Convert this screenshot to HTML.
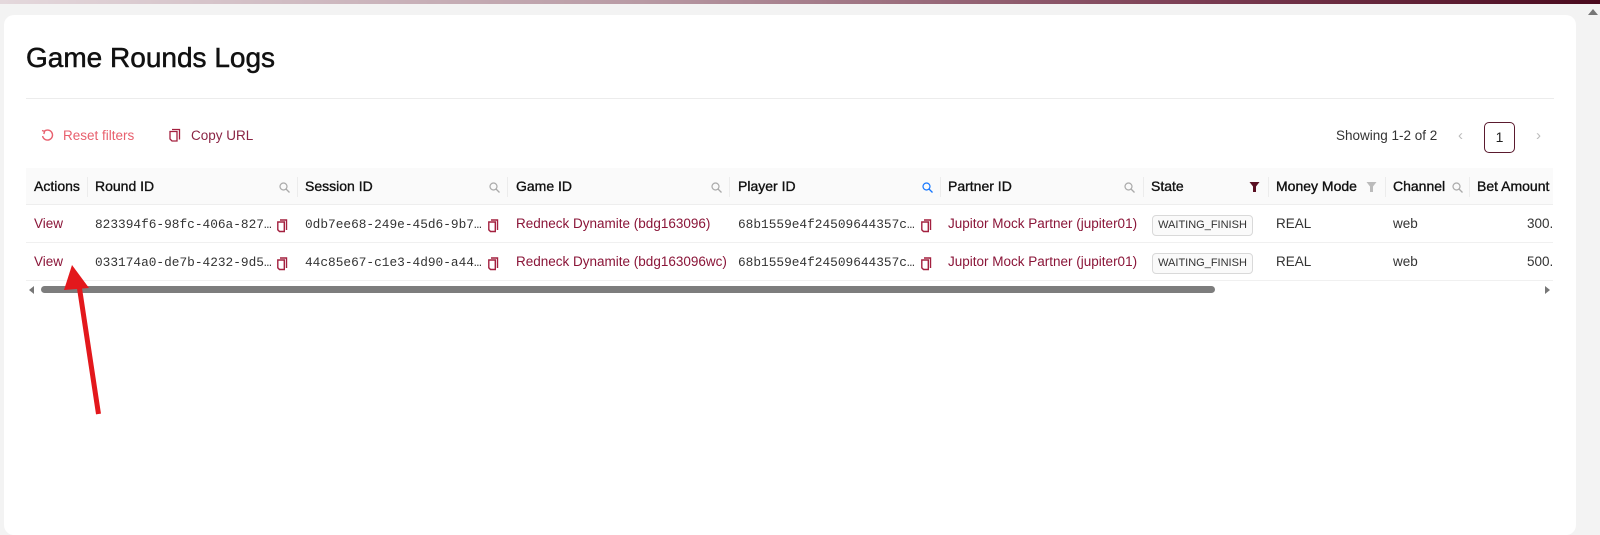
<!DOCTYPE html>
<html><head><style>
*{box-sizing:border-box;margin:0;padding:0}
body{width:1600px;height:512px;background:#f3f3f3;font-family:"Liberation Sans",sans-serif;position:relative;overflow:hidden;color:#1f1f1f}
.topbar{position:absolute;left:0;top:0;width:1600px;height:4px;background:linear-gradient(90deg,#e4d8dc,#b89aa4 40%,#7a3c52 75%,#4a0a1e)}
.card{position:absolute;left:4px;top:15px;width:1572px;height:520px;background:#fff;border-radius:10px}
.a{position:absolute;white-space:nowrap}
.title{left:26px;top:42px;font-size:28px;color:#111;-webkit-text-stroke:0.5px #111}
.div{position:absolute;left:26px;top:98px;width:1528px;height:1px;background:#ececec}
.tb{font-size:13.5px;top:128px}
.hdr{position:absolute;left:26px;top:168px;width:1528px;height:37px;background:#fafafa;border-bottom:1px solid #eee}
.row{position:absolute;left:26px;width:1528px;height:38px;border-bottom:1px solid #f0f0f0}
.h{font-size:14px;color:#111;top:178px;-webkit-text-stroke:0.35px #111}
.sep{position:absolute;top:177px;width:1px;height:20px;background:#ececec}
.c{font-size:13.5px}
.m{font-family:"Liberation Mono",monospace;font-size:12.8px;color:#333}
.lk{color:#8a1538}
.tag{position:absolute;border:1px solid #d9d9d9;border-radius:4px;background:#fafafa;font-size:11px;color:#333;width:101px;height:21px;line-height:19px;text-align:center}
</style></head><body>
<div class="topbar"></div>
<div style="position:absolute;left:1588px;top:9px;width:0;height:0;border-left:5px solid transparent;border-right:5px solid transparent;border-bottom:6px solid #777"></div>
<div class="card"></div>
<div class="a title">Game Rounds Logs</div>
<div class="div"></div>

<svg class="a" style="left:41px;top:129px" width="13" height="13" viewBox="0 0 13 13"><path d="M3 2.5 A5 5 0 1 1 1.6 7" fill="none" stroke="#e8606e" stroke-width="1.4"/><path d="M1 1.5 L3.6 2.4 L2.8 5" fill="none" stroke="#e8606e" stroke-width="1.4"/></svg>
<div class="a tb" style="left:63px;color:#e8606e">Reset filters</div>
<svg class="a" style="left:169px;top:128px" width="12" height="14" viewBox="0 0 12 14"><path d="M3 1.5h7.5v10" fill="none" stroke="#a3203f" stroke-width="1.3"/><path d="M1 3.5h7v9.5H3L1 11z" fill="#fff" stroke="#a3203f" stroke-width="1.3"/></svg>
<div class="a tb" style="left:191px;color:#8a2444">Copy URL</div>

<div class="a" style="left:1336px;top:128px;font-size:13.5px;color:#333">Showing 1-2 of 2</div>
<div class="a" style="left:1458px;top:127px;font-size:15px;color:#bbb">‹</div>
<div class="a" style="left:1484px;top:122px;width:31px;height:31px;border:1px solid #5a1a2e;border-radius:5px;text-align:center;line-height:29px;font-size:14px;color:#222">1</div>
<div class="a" style="left:1536px;top:127px;font-size:15px;color:#bbb">›</div>

<div class="hdr"></div>
<div class="row" style="top:205px"></div>
<div class="row" style="top:243px"></div>

<div class="a h" style="left:34px">Actions</div>
<div class="sep" style="left:87px"></div>
<div class="a h" style="left:95px">Round ID</div>
<div class="sep" style="left:297px"></div>
<div class="a h" style="left:305px">Session ID</div>
<div class="sep" style="left:507px"></div>
<div class="a h" style="left:516px">Game ID</div>
<div class="sep" style="left:729px"></div>
<div class="a h" style="left:738px">Player ID</div>
<div class="sep" style="left:940px"></div>
<div class="a h" style="left:948px">Partner ID</div>
<div class="sep" style="left:1143px"></div>
<div class="a h" style="left:1151px">State</div>
<div class="sep" style="left:1268px"></div>
<div class="a h" style="left:1276px">Money Mode</div>
<div class="sep" style="left:1385px"></div>
<div class="a h" style="left:1393px">Channel</div>
<div class="sep" style="left:1469px"></div>
<div class="a h" style="left:1477px">Bet Amount</div>

<svg width="0" height="0" style="position:absolute"><defs>
<g id="srch"><circle cx="4.5" cy="4.5" r="3.5" fill="none" stroke-width="1.2"/><path d="M7 7l3.5 3.5" stroke-width="1.3"/></g>
<g id="cp"><path d="M3 1h6.5v10" fill="none" stroke="#a3203f" stroke-width="1.4"/><path d="M0.8 3h6.5v9.5H2.5L0.8 10.8z" fill="#fff" stroke="#a3203f" stroke-width="1.4"/></g>
</defs></svg>
<svg class="a" style="left:279px;top:182px" width="11" height="11" stroke="#aaa"><use href="#srch"/></svg>
<svg class="a" style="left:489px;top:182px" width="11" height="11" stroke="#aaa"><use href="#srch"/></svg>
<svg class="a" style="left:711px;top:182px" width="11" height="11" stroke="#aaa"><use href="#srch"/></svg>
<svg class="a" style="left:922px;top:182px" width="11" height="11" stroke="#1677ff"><use href="#srch"/></svg>
<svg class="a" style="left:1124px;top:182px" width="11" height="11" stroke="#aaa"><use href="#srch"/></svg>
<svg class="a" style="left:1249px;top:181px" width="11" height="12"><path d="M0.5 1h10L7 5.5V11H4V5.5z" fill="#5a0f22"/></svg>
<svg class="a" style="left:1366px;top:181px" width="11" height="12"><path d="M0.5 1h10L7 5.5V11H4V5.5z" fill="#bbb"/></svg>
<svg class="a" style="left:1452px;top:182px" width="11" height="11" stroke="#aaa"><use href="#srch"/></svg>

<!-- row 1 -->
<div class="a c lk" style="left:34px;top:216px">View</div>
<div class="a m" style="left:95px;top:217px">823394f6-98fc-406a-827…</div>
<svg class="a" style="left:277px;top:219px" width="11" height="14"><use href="#cp"/></svg>
<div class="a m" style="left:305px;top:217px">0db7ee68-249e-45d6-9b7…</div>
<svg class="a" style="left:488px;top:219px" width="11" height="14"><use href="#cp"/></svg>
<div class="a c lk" style="left:516px;top:216px">Redneck Dynamite (bdg163096)</div>
<div class="a m" style="left:738px;top:217px">68b1559e4f24509644357c…</div>
<svg class="a" style="left:921px;top:219px" width="11" height="14"><use href="#cp"/></svg>
<div class="a c lk" style="left:948px;top:216px">Jupitor Mock Partner (jupiter01)</div>
<div class="tag" style="left:1152px;top:215px">WAITING_FINISH</div>
<div class="a c" style="left:1276px;top:216px;color:#333">REAL</div>
<div class="a c" style="left:1393px;top:216px;color:#333">web</div>
<div class="a c" style="left:1527px;top:216px;color:#333">300.0</div>

<!-- row 2 -->
<div class="a c lk" style="left:34px;top:254px">View</div>
<div class="a m" style="left:95px;top:255px">033174a0-de7b-4232-9d5…</div>
<svg class="a" style="left:277px;top:257px" width="11" height="14"><use href="#cp"/></svg>
<div class="a m" style="left:305px;top:255px">44c85e67-c1e3-4d90-a44…</div>
<svg class="a" style="left:488px;top:257px" width="11" height="14"><use href="#cp"/></svg>
<div class="a c lk" style="left:516px;top:254px">Redneck Dynamite (bdg163096wc)</div>
<div class="a m" style="left:738px;top:255px">68b1559e4f24509644357c…</div>
<svg class="a" style="left:921px;top:257px" width="11" height="14"><use href="#cp"/></svg>
<div class="a c lk" style="left:948px;top:254px">Jupitor Mock Partner (jupiter01)</div>
<div class="tag" style="left:1152px;top:253px">WAITING_FINISH</div>
<div class="a c" style="left:1276px;top:254px;color:#333">REAL</div>
<div class="a c" style="left:1393px;top:254px;color:#333">web</div>
<div class="a c" style="left:1527px;top:254px;color:#333">500.0</div>

<div class="a" style="left:1553px;top:160px;width:23px;height:140px;background:#fff"></div>

<!-- scrollbar -->
<div class="a" style="left:29px;top:286px;width:0;height:0;border-top:4px solid transparent;border-bottom:4px solid transparent;border-right:5px solid #777"></div>
<div class="a" style="left:41px;top:286px;width:1174px;height:7px;border-radius:4px;background:#7d7d7d"></div>
<div class="a" style="left:1545px;top:286px;width:0;height:0;border-top:4px solid transparent;border-bottom:4px solid transparent;border-left:5px solid #777"></div>

<!-- red arrow -->
<svg class="a" style="left:0;top:0" width="200" height="512"><path d="M98.5 414L79 285" stroke="#e3181c" stroke-width="5"/><path d="M72 265L64 290L89 288z" fill="#e3181c"/></svg>
</body></html>
